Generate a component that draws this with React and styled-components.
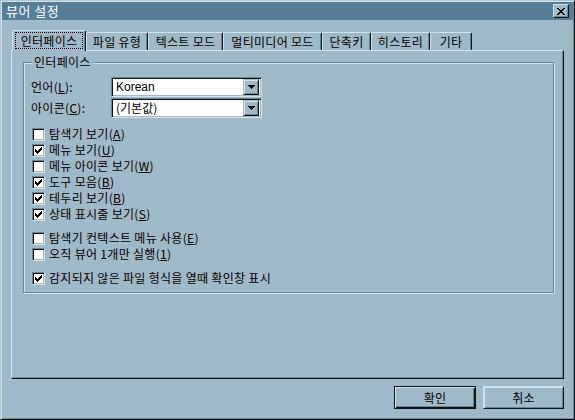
import React from 'react';
import styled, { createGlobalStyle } from 'styled-components';

const BG = '#a0b9c8';
const LIGHT = '#d2e2ec';
const SHADOW = '#6a8798';
const DARK = '#0c1418';

const Global = createGlobalStyle`
  html, body { margin: 0; padding: 0; background: ${BG}; }
  body {
    font-family: "Noto Sans CJK KR", "Noto Sans", sans-serif;
    font-size: 12px;
    letter-spacing: 0.3px;
    color: #000;
  }
  * { box-sizing: border-box; }
`;

const Window = styled.div`
  width: 575px;
  height: 420px;
  background: ${BG};
  border-top: 1px solid #b4c8d4;
  border-left: 1px solid #b4c8d4;
  border-right: 1px solid ${DARK};
  border-bottom: 1px solid ${DARK};
  box-shadow: inset 1px 1px 0 ${LIGHT}, inset -1px -1px 0 ${SHADOW};
  padding: 1px;
  display: flex;
  flex-direction: column;
`;

const TitleBar = styled.div`
  height: 18px;
  flex: none;
  background: #587e96;
  color: #fff;
  display: flex;
  align-items: center;
  justify-content: space-between;
  padding: 0 2px 0 4px;
  font-size: 13px;
  line-height: 18px;
`;

const TitleText = styled.span`
  letter-spacing: 0.5px;
`;

const CloseButton = styled.div`
  width: 16px;
  height: 14px;
  background: ${BG};
  border-top: 1px solid ${LIGHT};
  border-left: 1px solid ${LIGHT};
  border-right: 1px solid ${DARK};
  border-bottom: 1px solid ${DARK};
  box-shadow: inset -1px -1px 0 ${SHADOW};
  display: flex;
  align-items: center;
  justify-content: center;
  margin-right: 2px;
`;

const Body = styled.div`
  flex: 1;
  display: flex;
  flex-direction: column;
  padding: 10px 9px 9px 9px;
`;

const TabRow = styled.div`
  display: flex;
  align-items: flex-end;
  height: 20px;
  flex: none;
  padding-left: 1px;
  position: relative;
  z-index: 1;
`;

const Tab = styled.div`
  width: ${p => p.$w}px;
  height: ${p => (p.$active ? 21 : 18)}px;
  margin-bottom: ${p => (p.$active ? -1 : 0)}px;
  background: ${BG};
  border-top: 1px solid ${LIGHT};
  border-left: 1px solid ${LIGHT};
  border-right: 1px solid ${DARK};
  border-radius: 2px 2px 0 0;
  box-shadow: inset -1px 0 0 ${SHADOW};
  display: flex;
  align-items: center;
  justify-content: center;
  line-height: 16px;
  white-space: nowrap;
  padding: ${p => (p.$active ? '1px 2px 2px' : '0 1px')};
`;

const FocusLabel = styled.span`
  flex: 1;
  align-self: stretch;
  display: flex;
  align-items: center;
  justify-content: center;
  outline: 1px dotted #000;
  outline-offset: -1px;
`;

const Panel = styled.div`
  flex: 1;
  border-top: 1px solid ${LIGHT};
  border-left: 1px solid ${LIGHT};
  border-right: 1px solid ${DARK};
  border-bottom: 1px solid ${DARK};
  box-shadow: inset -1px -1px 0 ${SHADOW};
  padding: 11px 9px 0 11px;
`;

const GroupBox = styled.div`
  position: relative;
  border: 1px solid ${SHADOW};
  box-shadow: inset 1px 1px 0 ${LIGHT}, 1px 1px 0 ${LIGHT};
  padding: 14px 7px 8px 7px;
  height: 231px;
`;

const GroupLegend = styled.span`
  position: absolute;
  top: -9px;
  left: 8px;
  background: ${BG};
  padding: 0 2px;
  line-height: 16px;
`;

const FormGrid = styled.div`
  display: grid;
  grid-template-columns: 80px 151px;
  row-gap: 1px;
  align-items: center;
`;

const FieldLabel = styled.span`
  line-height: 16px;
`;

const Combo = styled.div`
  height: 20px;
  background: #fff;
  border-top: 1px solid ${SHADOW};
  border-left: 1px solid ${SHADOW};
  border-right: 1px solid ${LIGHT};
  border-bottom: 1px solid ${LIGHT};
  box-shadow: inset 1px 1px 0 ${DARK}, inset -1px -1px 0 ${BG};
  padding: 2px;
  display: flex;
  align-items: center;
`;

const ComboText = styled.span`
  flex: 1;
  padding-left: 2px;
  letter-spacing: 0;
  font-family: ${p => (p.$latin ? '"Liberation Sans", Arial, sans-serif' : '"Noto Sans CJK KR", sans-serif')};
  font-size: 12px;
  line-height: 16px;
`;

const DropButton = styled.div`
  width: 16px;
  height: 16px;
  background: ${BG};
  border-top: 1px solid ${BG};
  border-left: 1px solid ${BG};
  border-right: 1px solid ${DARK};
  border-bottom: 1px solid ${DARK};
  box-shadow: inset 1px 1px 0 ${LIGHT}, inset -1px -1px 0 ${SHADOW};
  display: flex;
  align-items: center;
  justify-content: center;
`;

const CheckList = styled.div`
  display: flex;
  flex-direction: column;
  margin-top: 8px;
  padding-left: 1px;
`;

const CheckRow = styled.div`
  display: flex;
  align-items: center;
  height: 16px;
  gap: 4px;
  margin-top: ${p => (p.$gap ? 8 : 0)}px;
  line-height: 16px;
`;

const CheckBox = styled.div`
  width: 13px;
  height: 13px;
  flex: none;
  background: #fff;
  border-top: 1px solid ${SHADOW};
  border-left: 1px solid ${SHADOW};
  border-right: 1px solid ${LIGHT};
  border-bottom: 1px solid ${LIGHT};
  box-shadow: inset 1px 1px 0 ${DARK}, inset -1px -1px 0 ${BG};
  display: flex;
  align-items: center;
  justify-content: center;
`;

const Mn = styled.u`
  text-decoration: underline;
  text-underline-offset: 1px;
`;

const ButtonRow = styled.div`
  display: flex;
  justify-content: flex-end;
  gap: 7px;
  margin-top: 7px;
  flex: none;
`;

const Button = styled.div`
  width: ${p => (p.$default ? 82 : 81)}px;
  height: 23px;
  background: ${BG};
  border: 1px solid ${p => (p.$default ? DARK : BG)};
  box-shadow: ${p =>
    p.$default
      ? `inset 1px 1px 0 ${LIGHT}, inset -1px -1px 0 ${DARK}, inset -2px -2px 0 ${SHADOW}`
      : `inset 1px 1px 0 ${LIGHT}, inset -1px -1px 0 ${SHADOW}`};
  ${p => (!p.$default ? `border-top-color: ${LIGHT}; border-left-color: ${LIGHT}; border-right-color: ${DARK}; border-bottom-color: ${DARK};` : '')}
  display: flex;
  align-items: center;
  justify-content: center;
  line-height: 16px;
`;

const Check = () => (
  <svg width="7" height="7" viewBox="0 0 7 7" shapeRendering="crispEdges">
    <path
      d="M6 0h1v1h-1z M5 1h2v1h-2z M0 2h1v1h-1z M4 2h3v1h-3z M0 3h2v1h-2z M3 3h3v1h-3z M0 4h5v1h-5z M1 5h3v1h-3z M2 6h1v1h-1z"
      fill="#000"
    />
  </svg>
);

const Arrow = () => (
  <svg width="7" height="4" viewBox="0 0 7 4" shapeRendering="crispEdges">
    <path d="M0 0h7v1h-7z M1 1h5v1h-5z M2 2h3v1h-3z M3 3h1v1h-1z" fill="#000" />
  </svg>
);

const CloseX = () => (
  <svg width="8" height="7" viewBox="0 0 8 7" shapeRendering="crispEdges">
    <path
      d="M0 0h2v1h-2z M6 0h2v1h-2z M1 1h2v1h-2z M5 1h2v1h-2z M2 2h4v1h-4z M3 3h2v1h-2z M2 4h4v1h-4z M1 5h2v1h-2z M5 5h2v1h-2z M0 6h2v1h-2z M6 6h2v1h-2z"
      fill="#000"
    />
  </svg>
);

const tabs = [
  { label: '인터페이스', w: 74, active: true },
  { label: '파일 유형', w: 62 },
  { label: '텍스트 모드', w: 75 },
  { label: '멀티미디어 모드', w: 99 },
  { label: '단축키', w: 49 },
  { label: '히스토리', w: 59 },
  { label: '기타', w: 42 },
];

const checks = [
  { text: '탐색기 보기', mn: 'A', checked: false },
  { text: '메뉴 보기', mn: 'U', checked: true },
  { text: '메뉴 아이콘 보기', mn: 'W', checked: false },
  { text: '도구 모음', mn: 'B', checked: true },
  { text: '테두리 보기', mn: 'B', checked: true },
  { text: '상태 표시줄 보기', mn: 'S', checked: true },
  { text: '탐색기 컨텍스트 메뉴 사용', mn: 'E', checked: false, gap: true },
  { text: '오직 뷰어 1개만 실행', mn: '1', checked: false },
  { text: '감지되지 않은 파일 형식을 열때 확인창 표시', checked: true, gap: true },
];

export default function App() {
  return (
    <>
      <Global />
      <Window>
        <TitleBar>
          <TitleText>뷰어 설정</TitleText>
          <CloseButton>
            <CloseX />
          </CloseButton>
        </TitleBar>
        <Body>
          <TabRow>
            {tabs.map(t => (
              <Tab key={t.label} $w={t.w} $active={t.active}>
                {t.active ? <FocusLabel>{t.label}</FocusLabel> : t.label}
              </Tab>
            ))}
          </TabRow>
          <Panel>
            <GroupBox>
              <GroupLegend>인터페이스</GroupLegend>
              <FormGrid>
                <FieldLabel>
                  언어(<Mn>L</Mn>):
                </FieldLabel>
                <Combo>
                  <ComboText $latin>Korean</ComboText>
                  <DropButton>
                    <Arrow />
                  </DropButton>
                </Combo>
                <FieldLabel>
                  아이콘(<Mn>C</Mn>):
                </FieldLabel>
                <Combo>
                  <ComboText>(기본값)</ComboText>
                  <DropButton>
                    <Arrow />
                  </DropButton>
                </Combo>
              </FormGrid>
              <CheckList>
                {checks.map((c, i) => (
                  <CheckRow key={i} $gap={c.gap}>
                    <CheckBox>{c.checked && <Check />}</CheckBox>
                    <span>
                      {c.text}
                      {c.mn && (
                        <>
                          (<Mn>{c.mn}</Mn>)
                        </>
                      )}
                    </span>
                  </CheckRow>
                ))}
              </CheckList>
            </GroupBox>
          </Panel>
          <ButtonRow>
            <Button $default>확인</Button>
            <Button>취소</Button>
          </ButtonRow>
        </Body>
      </Window>
    </>
  );
}
